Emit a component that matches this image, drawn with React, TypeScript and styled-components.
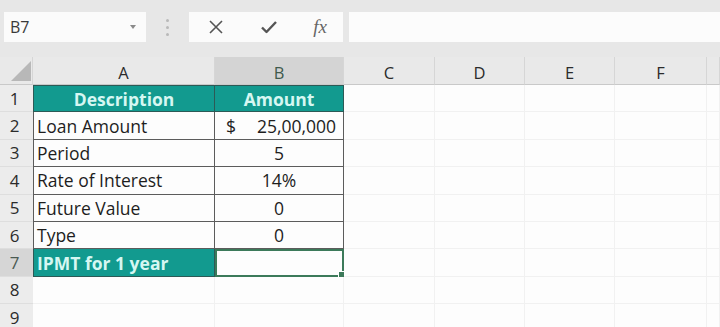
import React from 'react';
import styled, { createGlobalStyle, css } from 'styled-components';

/**
 *
 *  STYLE
 */
const GlobalStyle = createGlobalStyle`
  html, body {
    margin: 0;
    padding: 0;
    background: #ffffff;
  }
  body {
    font-family: "Open Sans", Lato, sans-serif;
    overflow: hidden;
  }
`;

const Page = styled.div`
  width: 720px;
  height: 327px;
  background: #fdfdfd;
  overflow: hidden;
`;

const Toolbar = styled.div`
  display: flex;
  align-items: center;
  height: 57px;
  padding: 0 0 3px 4px;
  box-sizing: border-box;
  background: #e7e7e7;
`;

const NameBox = styled.div`
  display: flex;
  align-items: center;
  justify-content: space-between;
  width: 142px;
  height: 30px;
  padding: 0 10px 0 6px;
  box-sizing: border-box;
  background: #fbfbfb;
  color: #3a3a3a;
  font-size: 16px;
`;

const Caret = styled.span`
  width: 0;
  height: 0;
  border-left: 3px solid transparent;
  border-right: 3px solid transparent;
  border-top: 4px solid #8a8a8a;
`;

const Grip = styled.div`
  display: flex;
  flex-direction: column;
  gap: 4px;
  margin: 0 20px;
  span {
    width: 3px;
    height: 3px;
    border-radius: 50%;
    background: #b9b9b9;
  }
`;

const FuncBox = styled.div`
  display: flex;
  align-items: center;
  justify-content: space-between;
  width: 154px;
  height: 30px;
  padding: 0 16px 0 19px;
  box-sizing: border-box;
  background: #fbfbfb;
  color: #555;
`;

const Fx = styled.span`
  font-family: "Liberation Serif", serif;
  font-style: italic;
  font-size: 19px;
  color: #666;
`;

const FormulaInput = styled.div`
  flex: 1;
  height: 30px;
  margin-left: 6px;
  background: #fcfcfc;
`;

const Sheet = styled.div`
  display: grid;
  grid-template-columns: 33px 182px 129px 91px 90px 90px 92px 1fr;
  grid-template-rows: 28px repeat(9, 27.4px);
`;

const ColHead = styled.div<{ $active?: boolean }>`
  display: flex;
  align-items: center;
  justify-content: center;
  padding-top: 3px;
  box-sizing: border-box;
  background: ${p => (p.$active ? '#d4d4d4' : '#e9e9e9')};
  border-right: 1px solid #d6d6d6;
  border-bottom: 1px solid #c9c9c9;
  color: ${p => (p.$active ? '#3f5a4c' : '#2b2b2b')};
  font-size: 16.5px;
`;

const Corner = styled.div`
  position: relative;
  background: #e9e9e9;
  border-right: 1px solid #d6d6d6;
  border-bottom: 1px solid #c9c9c9;
  svg {
    position: absolute;
    right: 1px;
    bottom: 3px;
  }
`;

const RowHead = styled.div<{ $active?: boolean }>`
  display: flex;
  align-items: center;
  justify-content: center;
  padding-right: 4px;
  box-sizing: border-box;
  background: ${p => (p.$active ? '#d6d6d6' : '#ececec')};
  border-bottom: 1px solid #dedede;
  color: ${p => (p.$active ? '#4a5a52' : '#2b2b2b')};
  font-size: 17px;
`;

type Kind = 'head' | 'text' | 'blank';

const Cell = styled.div<{ $kind?: Kind; $align?: string; $edge?: boolean; $top?: boolean }>`
  position: relative;
  display: flex;
  align-items: center;
  justify-content: ${p => p.$align || 'flex-start'};
  padding: 0 3px;
  box-sizing: border-box;
  font-size: 17.5px;
  color: #1e1e1e;
  white-space: nowrap;
  border-right: 1px solid #f1f1f1;
  border-bottom: 1px solid #f1f1f1;

  ${p =>
    p.$kind !== 'blank' &&
    css`
      border-right: 1px solid #5c5c5c;
      border-bottom: 1px solid #5c5c5c;
    `}
  ${p => p.$edge && css`border-left: 1px solid #5c5c5c;`}
  ${p => p.$top && css`border-top: 1px solid #4a6b66;`}
  ${p =>
    p.$kind === 'head' &&
    css`
      background: #129a8f;
      color: #d6f7f2;
      font-weight: 700;
      border-color: #2c5a56;
    `}
`;

const Money = styled.div`
  display: flex;
  justify-content: space-between;
  width: 100%;
  padding: 0 4px 0 8px;
`;

const Selected = styled(Cell)`
  border: 2px solid #3c7a5a;
  &::after {
    content: '';
    position: absolute;
    right: -3px;
    bottom: -3px;
    width: 5px;
    height: 5px;
    background: #3c7a5a;
    border: 1px solid #fff;
  }
`;

/**
 *
 *  DATA
 */
const cols = ['A', 'B', 'C', 'D', 'E', 'F', ''];

const rows: { label: string; value: React.ReactNode }[] = [
  { label: 'Loan Amount', value: <Money><span>$</span><span>25,00,000</span></Money> },
  { label: 'Period', value: '5' },
  { label: 'Rate of Interest', value: '14%' },
  { label: 'Future Value', value: '0' },
  { label: 'Type', value: '0' },
];

const Blanks = () => (
  <>
    {[0, 1, 2, 3, 4].map(i => (
      <Cell key={i} $kind="blank" />
    ))}
  </>
);

/**
 *
 *  FUNCTIONAL COMPONENT
 */
export default function App() {
  return (
    <Page>
      <GlobalStyle />
      <Toolbar>
        <NameBox>
          B7
          <Caret />
        </NameBox>
        <Grip>
          <span />
          <span />
          <span />
        </Grip>
        <FuncBox>
          <svg width="16" height="16" viewBox="0 0 16 16">
            <path d="M2 2 L14 14 M14 2 L2 14" stroke="#555" strokeWidth="1.6" fill="none" />
          </svg>
          <svg width="18" height="16" viewBox="0 0 18 16">
            <path d="M2 8.5 L6.5 13 L16 3" stroke="#555" strokeWidth="2.4" fill="none" strokeLinejoin="round" />
          </svg>
          <Fx>fx</Fx>
        </FuncBox>
        <FormulaInput />
      </Toolbar>

      <Sheet>
        <Corner>
          <svg width="20" height="20" viewBox="0 0 20 20">
            <path d="M0 20 L20 0 L20 20 Z" fill="#b8b8b8" />
          </svg>
        </Corner>
        {cols.map((c, i) => (
          <ColHead key={i} $active={c === 'B'}>
            {c}
          </ColHead>
        ))}

        <RowHead>1</RowHead>
        <Cell $kind="head" $align="center" $edge $top>Description</Cell>
        <Cell $kind="head" $align="center" $top>Amount</Cell>
        <Blanks />

        {rows.map((r, i) => (
          <React.Fragment key={r.label}>
            <RowHead>{i + 2}</RowHead>
            <Cell $kind="text" $edge>{r.label}</Cell>
            <Cell $kind="text" $align="center">{r.value}</Cell>
            <Blanks />
          </React.Fragment>
        ))}

        <RowHead $active>7</RowHead>
        <Cell $kind="head" $edge>IPMT for 1 year</Cell>
        <Selected $kind="text" />
        <Blanks />

        <RowHead>8</RowHead>
        <Cell $kind="blank" />
        <Cell $kind="blank" />
        <Blanks />

        <RowHead>9</RowHead>
        <Cell $kind="blank" />
        <Cell $kind="blank" />
        <Blanks />
      </Sheet>
    </Page>
  );
}
